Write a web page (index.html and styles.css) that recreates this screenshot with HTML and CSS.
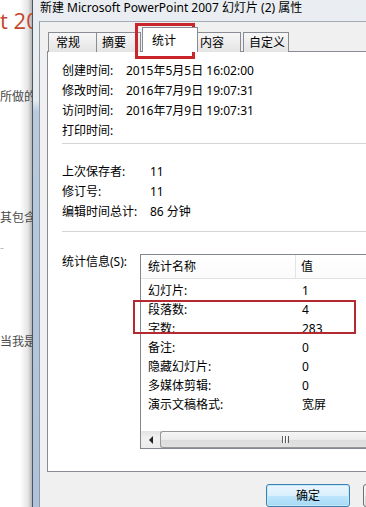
FILE: index.html
```html
<!DOCTYPE html>
<html lang="zh-CN">
  <head>
    <meta charset="UTF-8" />
    <meta name="viewport" content="width=device-width, initial-scale=1.0" />
    <title>属性</title>
    <link rel="stylesheet" href="styles.css">
  </head>
  <body>
    <div class="desk">
      <div class="doc">
        <div class="doc-title">t 20</div>
        <p class="l1">所做的</p>
        <p class="l2">其包含</p>
        <p class="l3">-</p>
        <p class="l4">当我是</p>
      </div>
      <div class="win">
        <div class="title">新建 Microsoft PowerPoint 2007 幻灯片 (2) 属性</div>
        <div class="dlg">
          <ul class="tabs">
            <li class="tab t1">常规</li>
            <li class="tab t2">摘要</li>
            <li class="tab t3 active">统计</li>
            <li class="tab t4">内容</li>
            <li class="tab t5">自定义</li>
          </ul>
          <div class="panel">
            <div class="info dates">
              <span>创建时间:</span><span>2015年5月5日 16:02:00</span>
              <span>修改时间:</span><span>2016年7月9日 19:07:31</span>
              <span>访问时间:</span><span>2016年7月9日 19:07:31</span>
              <span>打印时间:</span><span></span>
            </div>
            <div class="sep sep1"></div>
            <div class="info saves">
              <span>上次保存者:</span><span>11</span>
              <span>修订号:</span><span>11</span>
              <span>编辑时间总计:</span><span>86 分钟</span>
            </div>
            <div class="sep sep2"></div>
            <div class="stats">
              <div class="stats-label">统计信息(S):</div>
              <div class="listview">
                <div class="lv-head">
                  <div class="c1">统计名称</div>
                  <div class="c2">值</div>
                </div>
                <div class="lv-body">
                  <div class="lv-row"><div class="c1">幻灯片:</div><div class="c2">1</div></div>
                  <div class="lv-row"><div class="c1">段落数:</div><div class="c2">4</div></div>
                  <div class="lv-row"><div class="c1">字数:</div><div class="c2">283</div></div>
                  <div class="lv-row"><div class="c1">备注:</div><div class="c2">0</div></div>
                  <div class="lv-row"><div class="c1">隐藏幻灯片:</div><div class="c2">0</div></div>
                  <div class="lv-row"><div class="c1">多媒体剪辑:</div><div class="c2">0</div></div>
                  <div class="lv-row"><div class="c1">演示文稿格式:</div><div class="c2">宽屏</div></div>
                </div>
                <div class="hscroll">
                  <div class="arrow"><span class="tri"></span></div>
                  <div class="thumb"><span class="grip"></span></div>
                </div>
              </div>
            </div>
          </div>
          <div class="buttons">
            <button class="btn default">确定</button>
            <button class="btn">取消</button>
          </div>
        </div>
      </div>
    </div>
    <div class="mark mark-tab"></div>
    <div class="mark mark-rows"></div>
  </body>
</html>
```

FILE: styles.css
```css
* { box-sizing: border-box; }
html, body { width: 366px; height: 507px; margin: 0; overflow: hidden; background: #fff; }
body { position: relative; font: 12px/20px "Noto Sans", "Noto Sans CJK SC", sans-serif; color: #000; }
.desk { display: flex; height: 507px; }

/* document behind the dialog */
.doc { flex: none; width: 32px; overflow: hidden; white-space: nowrap; color: #4a4a4a; background: linear-gradient(to right, #fff 0, #fff 20px, #e4e4e4 28px, #b4b4b4 32px); }
.doc-title { margin-top: 8px; font: 400 22px/24px "Open Sans", sans-serif; color: #c4472e; }
.doc p { margin: 0; line-height: 16px; }
.doc .l1 { margin-top: 57px; }
.doc .l2 { margin-top: 105px; }
.doc .l3 { margin-top: 14px; color: #bbb; }
.doc .l4 { margin-top: 78px; }

/* window frame */
.win { flex: 1; min-width: 0; display: flex; flex-direction: column; border-left: 1px solid #4d5560; background: linear-gradient(#eaeef2 0, #e6ebf0 100px, #b9cade 112px, #aec2da 100%); }
.title { height: 22px; padding-left: 7px; line-height: 16px; white-space: nowrap; }
.dlg { flex: 1; margin-left: 6px; padding: 5px 0 0 7px; border-left: 1px solid #8e9aa8; border-top: 1px solid #a3acb6; background: #f0f0f0; }

/* tabs */
.tabs { display: flex; align-items: flex-end; height: 25px; margin: 0 0 -1px; padding: 0 0 0 1px; list-style: none; }
.tab { height: 20px; line-height: 19px; white-space: nowrap; border: 1px solid #898c95; border-bottom: none; background: linear-gradient(#f7f7f7, #e4e4e4); }
.t1 { width: 49px; padding-left: 7px; }
.t2 { width: 44px; padding-left: 5px; border-left: none; }
.t3 { width: 56px; padding-left: 9px; margin-left: 1px; }
.t4 { width: 43px; padding-left: 2px; border-left: none; }
.t5 { width: 46px; padding-left: 5px; margin-left: 2px; }
.tab.active { position: relative; z-index: 1; height: 25px; line-height: 26px; background: #fff; }

/* tab page */
.panel { width: 345px; height: 421px; padding: 9px 0 0 14px; border: 1px solid #898c95; background: #fff; }
.info { display: grid; grid-template-columns: 64px auto; line-height: 20px; white-space: nowrap; }
.saves { grid-template-columns: 88px auto; }
.sep { height: 1px; background: #d5d5d5; }
.sep1 { margin: 2px 0 18px; }
.sep2 { margin: 9px 0 22px; }

.stats { display: flex; }
.stats-label { flex: none; width: 78px; line-height: 16px; white-space: nowrap; }
.listview { display: flex; flex-direction: column; width: 250px; height: 195px; border: 1px solid #828790; }
.lv-head { display: flex; height: 24px; line-height: 23px; border-bottom: 1px solid #e3e3e3; background: linear-gradient(#fff, #fbfbfb); }
.c1 { flex: none; width: 155px; padding-left: 7px; white-space: nowrap; }
.c2 { padding-left: 6px; white-space: nowrap; }
.lv-head .c1 { border-right: 1px solid #e4e4e4; }
.lv-head .c2 { padding-left: 5px; }
.lv-body { flex: 1; padding-top: 2px; }
.lv-row { display: flex; height: 19px; line-height: 19px; }

/* horizontal scrollbar */
.hscroll { display: flex; height: 17px; background: linear-gradient(#e3e3e3, #f1f1f1 40%, #ececec); }
.arrow { display: flex; align-items: center; justify-content: center; width: 17px; }
.tri { width: 0; height: 0; border-top: 4px solid transparent; border-bottom: 4px solid transparent; border-right: 4px solid #222; margin-left: 2px; }
.thumb { flex: 1; display: flex; align-items: center; margin: 0 0 0 2px; padding-left: 121px; border: 1px solid #979797; border-right: none; border-radius: 3px 0 0 3px; background: linear-gradient(#f6f6f6, #ececec 50%, #dcdcdc 51%, #e2e2e2); }
.grip { width: 7px; height: 7px; background: repeating-linear-gradient(to right, #5a5a5a 0 1px, #fff 1px 2px, transparent 2px 3px); }

/* buttons */
.buttons { display: flex; margin-top: 12px; padding-left: 219px; }
.btn { flex: none; width: 84px; height: 23px; padding: 0; font: 12px/21px "Noto Sans", "Noto Sans CJK SC", sans-serif; color: #000; border: 1px solid #707070; border-radius: 3px; background: linear-gradient(#f2f2f2, #ebebeb 50%, #dddddd 51%, #cfcfcf); box-shadow: inset 0 0 0 1px rgba(255, 255, 255, 0.7); }
.btn + .btn { margin-left: 13px; }
.btn.default { border-color: #3c7fb1; background: linear-gradient(#eaf6fd, #d9f0fc 50%, #bee6fd 51%, #a7d9f5); box-shadow: inset 0 0 0 1px #c6e9fc; }

/* red annotation boxes drawn over the screenshot */
.mark { position: absolute; border: 2px solid #c9252b; }
.mark-tab { left: 135px; top: 23px; width: 60px; height: 36px; border-width: 3px; }
.mark-rows { left: 133px; top: 300px; width: 223px; height: 34px; border-color: #b52a30; }
```
